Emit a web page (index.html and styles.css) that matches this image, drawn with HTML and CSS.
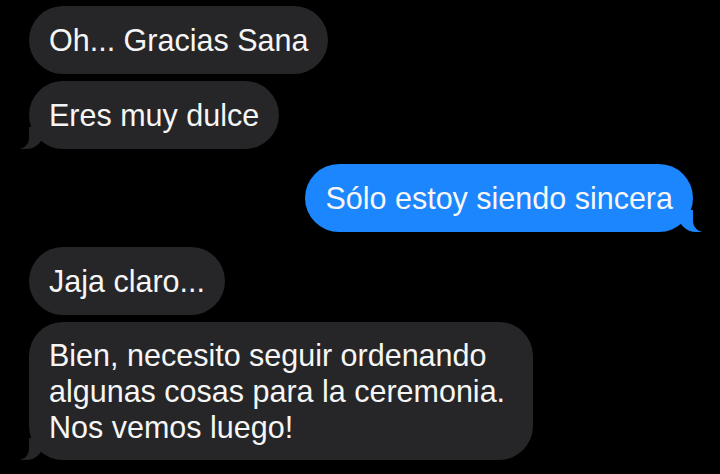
FILE: index.html
```html
<!DOCTYPE html>
<html>
    <head>
        <title>Mensajes</title>
        <link rel="stylesheet" href="styles.css">
    </head>
    <body>
        <div class="thread">
            <div class="bubble them first">Oh... Gracias Sana</div>
            <div class="bubble them tail">Eres muy dulce</div>

            <div class="bubble me tail">Sólo estoy siendo sincera</div>

            <div class="bubble them first">Jaja claro...</div>
            <div class="bubble them tail wide">Bien, necesito seguir ordenando<br>algunas cosas para la ceremonia.<br>Nos vemos luego!</div>
        </div>
    </body>
</html>
```

FILE: styles.css
```css
body{
    margin: 0;
    background-color: #000;
    font-family: "Liberation Sans", Arial, sans-serif;
}
.thread{
    display: flex;
    flex-direction: column;
    align-items: flex-start;
    padding: 6px 27px 0 29px;
}
.bubble{
    position: relative;
    padding: 16px 20px 16px 20px;
    border-radius: 34px;
    font-size: 30.5px;
    line-height: 36px;
    color: #f6f6f6;
    margin-bottom: 7px;
}
.them{
    background-color: #262628;
}
.me{
    background-color: #1b86fd;
    align-self: flex-end;
}
.tail{
    margin-bottom: 15px;
}
.wide{
    padding: 15px 28px 15px 20px;
}

/*----- TAILS -----*/
.tail::before, .tail::after{
    content: "";
    position: absolute;
    bottom: 0;
    height: 22px;
}
.them.tail::before{
    left: -9px;
    width: 24px;
    background-color: #262628;
    border-bottom-right-radius: 18px;
}
.them.tail::after{
    left: -12px;
    width: 12px;
    background-color: #000;
    border-bottom-right-radius: 11px;
}
.me.tail::before{
    right: -9px;
    width: 24px;
    background-color: #1b86fd;
    border-bottom-left-radius: 18px;
}
.me.tail::after{
    right: -12px;
    width: 12px;
    background-color: #000;
    border-bottom-left-radius: 11px;
}
```
